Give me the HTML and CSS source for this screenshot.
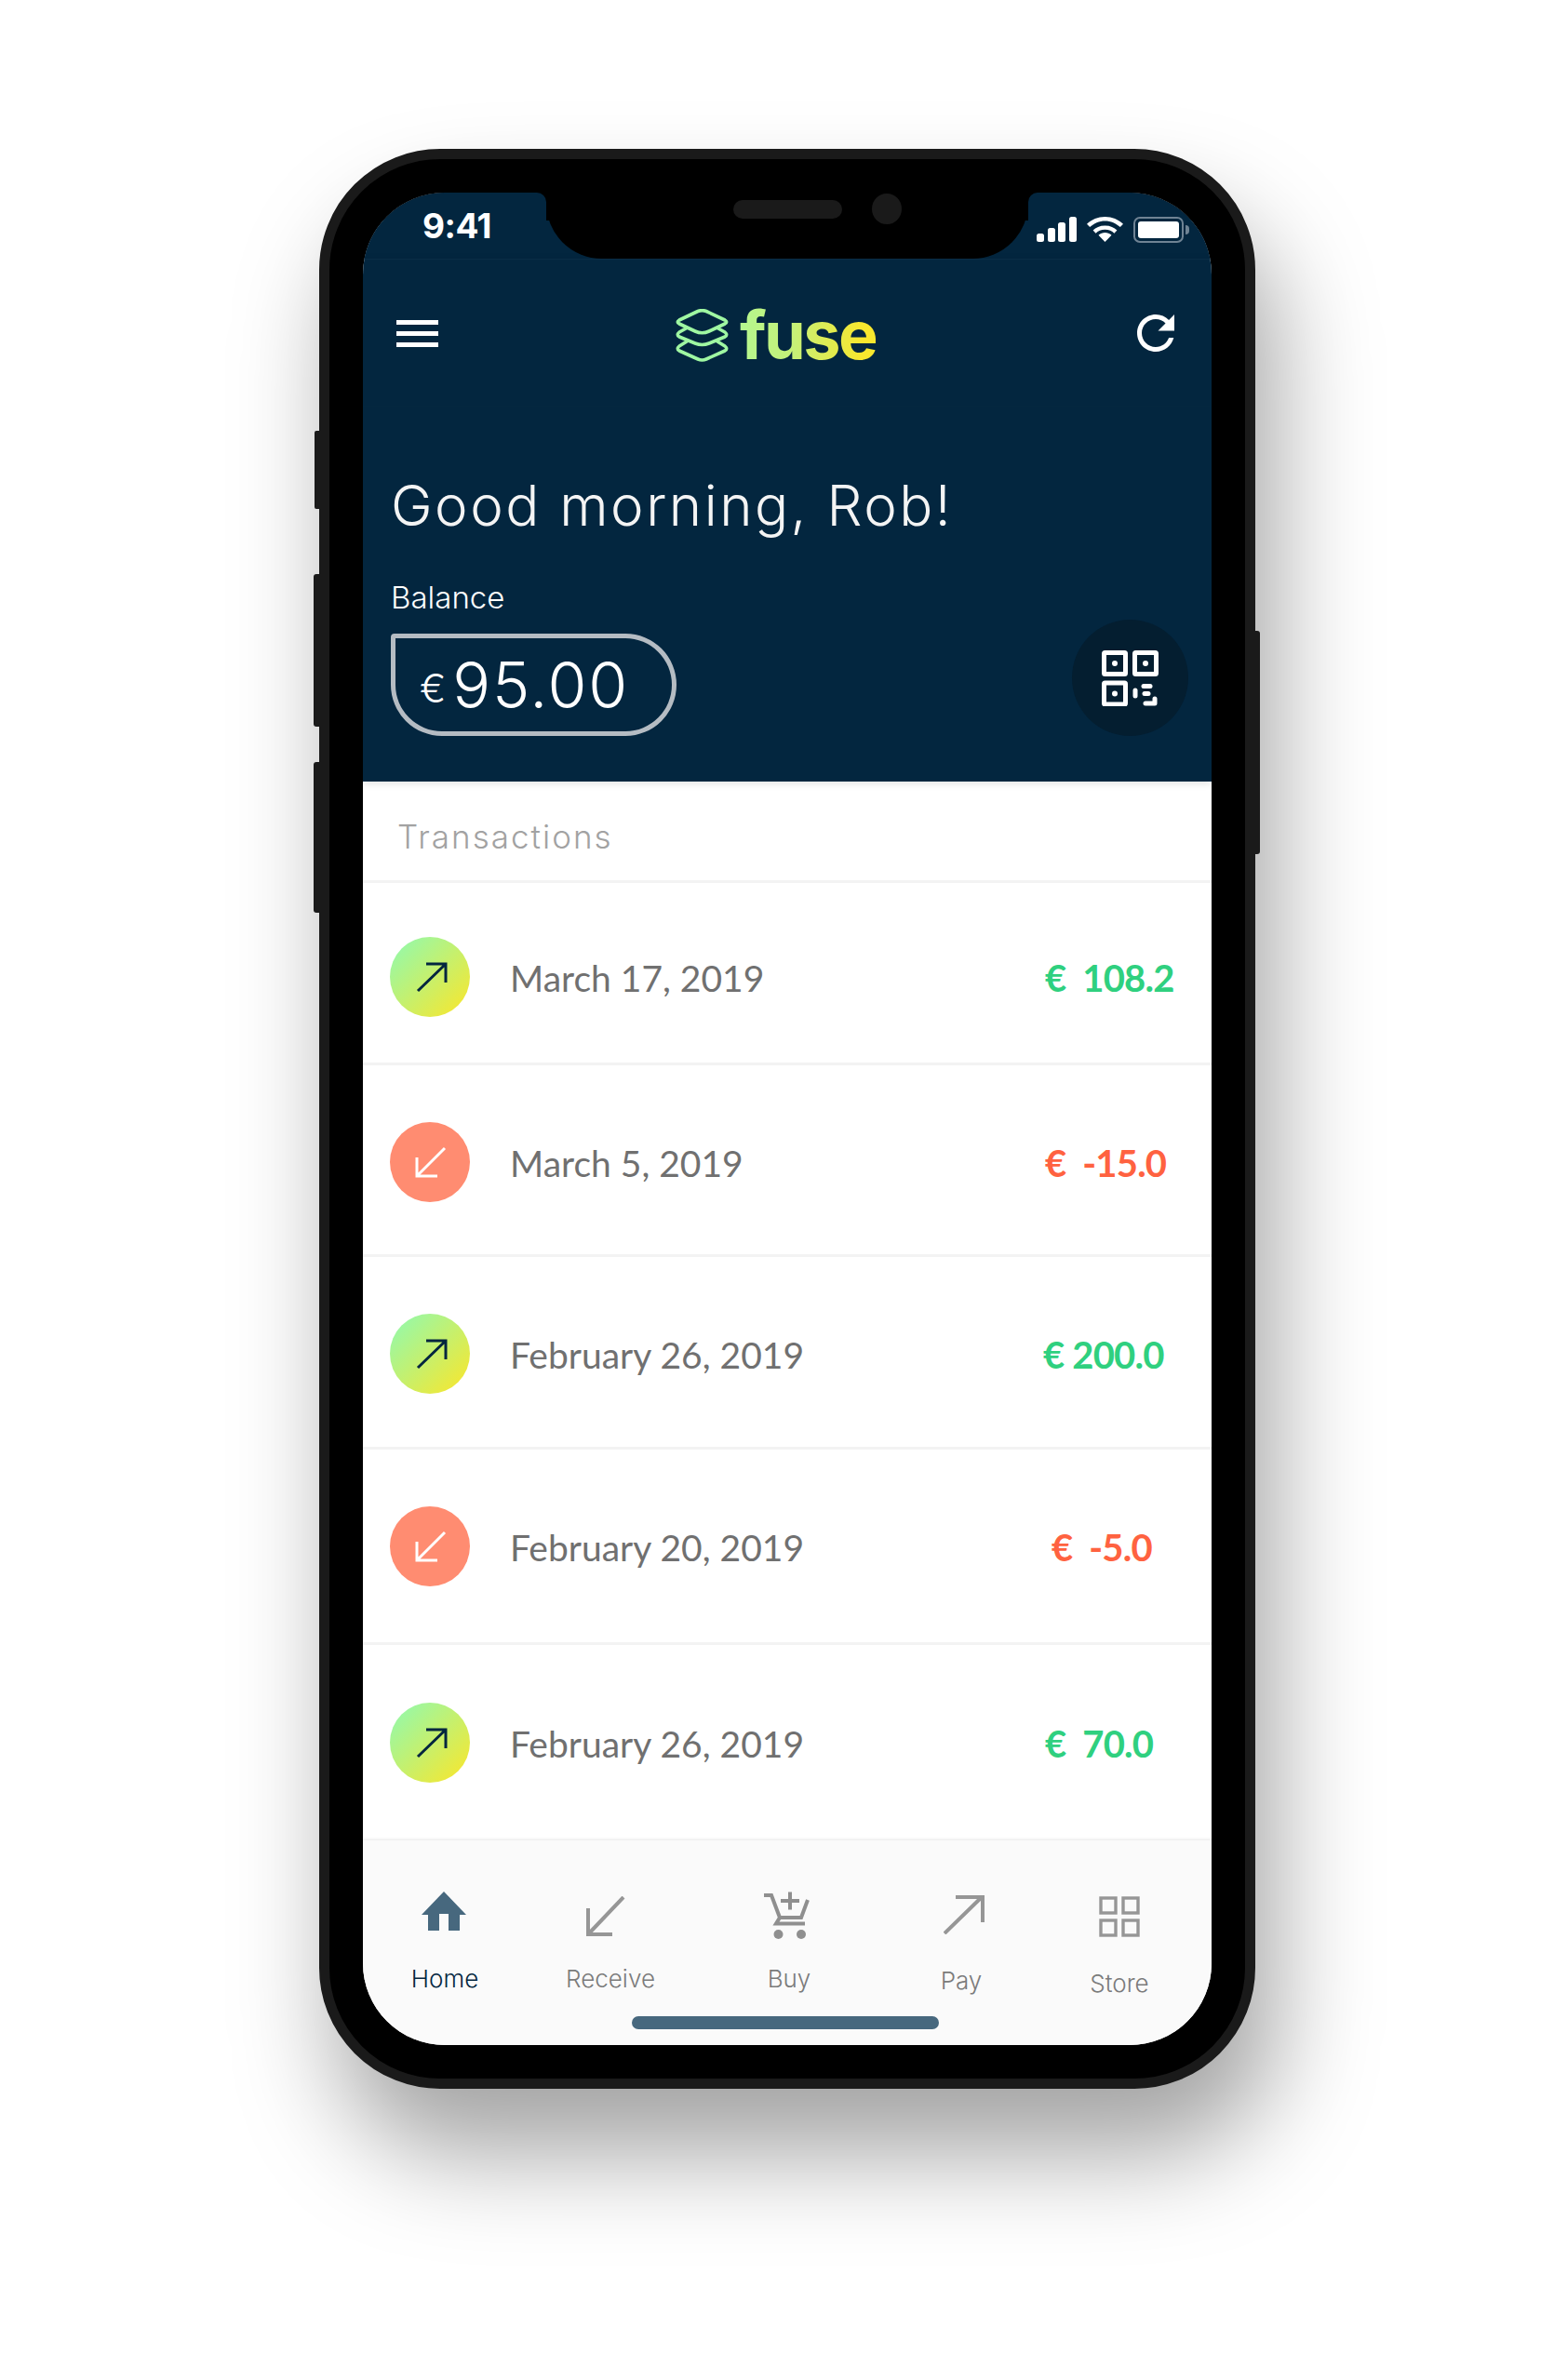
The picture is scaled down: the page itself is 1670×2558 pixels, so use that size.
FILE: index.html
```html
<!DOCTYPE HTML>
<html>
<head>
<meta charset="utf-8">
<title>fuse</title>
<link rel="stylesheet" href="styles.css">
</head>
<body>

<div class="phone">
    <!-- hardware buttons -->
    <div class="side-btn mute"></div>
    <div class="side-btn vol-up"></div>
    <div class="side-btn vol-down"></div>
    <div class="side-btn power"></div>

    <div class="screen">
        <div class="status">
            <div class="ear ear-left"><span class="clock">9:41</span></div>
            <div class="notch">
                <div class="speaker"></div>
                <div class="camera"></div>
            </div>
            <div class="ear ear-right">
                <svg class="signal" viewBox="0 0 43 27"><rect x="0" y="18" width="8" height="9" rx="2.5"/><rect x="12" y="12" width="8" height="15" rx="2.5"/><rect x="23" y="6" width="8" height="21" rx="2.5"/><rect x="35" y="0" width="8" height="27" rx="2.5"/></svg>
                <svg class="wifi" viewBox="0 0 39 27"><path d="M19.5 27 L12.5 19.8 C16.5 16.2 22.5 16.2 26.5 19.8 Z"/><path d="M19.5 9.5 C13.8 9.5 9.6 11.6 6.6 14.6 L9.6 17.7 C12 15.4 15.4 13.8 19.5 13.8 C23.6 13.8 27 15.4 29.4 17.7 L32.4 14.6 C29.4 11.6 25.2 9.5 19.5 9.5 Z"/><path d="M19.5 0 C11.8 0 5.2 3 0 7.8 L3.2 11 C7.6 7 13.2 4.4 19.5 4.4 C25.8 4.4 31.4 7 35.8 11 L39 7.8 C33.8 3 27.2 0 19.5 0 Z"/></svg>
                <div class="battery"><div class="battery-fill"></div></div>
                <div class="battery-tip"></div>
            </div>
        </div>

        <header class="top">
            <div class="appbar">
                <div class="burger"><span></span><span></span><span></span></div>
                <div class="logo">
                    <svg class="logo-mark" viewBox="0 0 57 57" fill="none" stroke="#9ff7a2" stroke-width="3.6" stroke-linecap="round" stroke-linejoin="round">
                        <path d="M24 2.500 Q28.500 0.800 33 2.500 L53 12 Q56.500 14 53 16 L36 24 Q28.500 27.500 21 24 L4 16 Q0.500 14 4 12 Z"/>
                        <path d="M12 20.500 L4 25 Q0.500 28 4 30 L21 37 Q28.500 40 36 37 L53 30 Q56.500 28 53 25 L45 20.500"/>
                        <path d="M12 35 L4 40 Q0.500 43 4 45 L24 54 Q28.500 56 33 54 L53 45 Q56.500 43 53 40 L45 35"/>
                    </svg>
                    <span class="logo-text">fuse</span>
                </div>
                <svg class="refresh" viewBox="0 0 24 24"><path d="M17.65 6.35C16.2 4.9 14.21 4 12 4c-4.42 0-7.99 3.58-7.99 8s3.57 8 7.99 8c3.73 0 6.84-2.55 7.73-6h-2.08c-.82 2.33-3.04 4-5.65 4-3.31 0-6-2.69-6-6s2.69-6 6-6c1.66 0 3.14.69 4.22 1.78L13 11h7V4l-2.35 2.35z"/></svg>
            </div>
            <div class="hero">
                <h1 class="greeting">Good morning, Rob!</h1>
                <p class="balance-label">Balance</p>
                <div class="balance-row">
                    <div class="balance-box"><span class="currency">€</span><span class="balance">95.00</span></div>
                    <div class="qr-btn">
                        <svg viewBox="0 0 61 60" fill="none" stroke="#fff" stroke-width="5" stroke-linejoin="round" stroke-linecap="round">
                            <rect x="2.5" y="2.5" width="23" height="23" rx="1"/>
                            <rect x="35.5" y="2.5" width="23" height="23" rx="1"/>
                            <rect x="2.5" y="35" width="23" height="23" rx="1"/>
                            <circle cx="14" cy="14" r="3" fill="#fff" stroke="none"/>
                            <circle cx="47" cy="14" r="3" fill="#fff" stroke="none"/>
                            <circle cx="14" cy="46.500" r="3" fill="#fff" stroke="none"/>
                            <path d="M36 43 V49"/>
                            <path d="M45 38.500 H52"/>
                            <path d="M46 46.500 H50"/>
                            <path d="M47 57 H57 V52"/>
                        </svg>
                    </div>
                </div>
            </div>
        </header>

        <div class="list-title">Transactions</div>

        <div class="list">
            <div class="row">
                <svg class="tx-icon in" viewBox="0 0 86 86"><path d="M30 58 L60 29 M39 29 H60 V49"/></svg>
                <span class="date">March 17, 2019</span>
                <span class="amount green">€&nbsp; 108.2</span>
            </div>
            <div class="row">
                <svg class="tx-icon out" viewBox="0 0 86 86"><path d="M59 28 L29 58 M29 38 V58 H51"/></svg>
                <span class="date">March 5, 2019</span>
                <span class="amount red">€&nbsp; -15.0</span>
            </div>
            <div class="row">
                <svg class="tx-icon in" viewBox="0 0 86 86"><path d="M30 58 L60 29 M39 29 H60 V49"/></svg>
                <span class="date">February 26, 2019</span>
                <span class="amount green tight">€ 200.0</span>
            </div>
            <div class="row">
                <svg class="tx-icon out" viewBox="0 0 86 86"><path d="M59 28 L29 58 M29 38 V58 H51"/></svg>
                <span class="date">February 20, 2019</span>
                <span class="amount red inset">€&nbsp; -5.0</span>
            </div>
            <div class="row">
                <svg class="tx-icon in" viewBox="0 0 86 86"><path d="M30 58 L60 29 M39 29 H60 V49"/></svg>
                <span class="date">February 26, 2019</span>
                <span class="amount green">€&nbsp; 70.0</span>
            </div>
        </div>

        <nav class="tabbar">
            <div class="tabs">
                <div class="tab active">
                    <div class="tab-icon"><svg class="ico-home" viewBox="0 0 48 42"><path d="M24 0 L48 25 H41 V42 H29 V24 H19 V42 H7 V25 H0 Z"/></svg></div>
                    <span>Home</span>
                </div>
                <div class="tab">
                    <div class="tab-icon"><svg class="ico-receive" viewBox="0 0 44 44" fill="none" stroke="#969696" stroke-width="4"><path d="M42 1 L4 41 M4 13 V41 H30"/></svg></div>
                    <span>Receive</span>
                </div>
                <div class="tab">
                    <div class="tab-icon"><svg class="ico-buy" viewBox="18 13 50 52" fill="none" stroke="#8f8f8f" stroke-width="4"><path d="M19 17 H27 L36 41 M66 22 L59 41 H36 L32 47.500 H63"/><path d="M47 13.500 V32.500 M37 23 H57"/><circle cx="34.500" cy="59" r="5" fill="#8f8f8f" stroke="none"/><circle cx="59" cy="59" r="5" fill="#8f8f8f" stroke="none"/></svg></div>
                    <span>Buy</span>
                </div>
                <div class="tab pay">
                    <div class="tab-icon"><svg class="ico-pay" viewBox="0 0 44 42" fill="none" stroke="#969696" stroke-width="4"><path d="M1 41 L41 2 M13 2 H42 V29"/></svg></div>
                    <span>Pay</span>
                </div>
                <div class="tab store">
                    <div class="tab-icon"><svg class="ico-store" viewBox="0 0 44 44" fill="none" stroke="#969696" stroke-width="3.4"><rect x="2" y="2" width="16" height="16"/><rect x="26" y="2" width="16" height="16"/><rect x="2" y="26" width="16" height="16"/><rect x="26" y="26" width="16" height="16"/></svg></div>
                    <span>Store</span>
                </div>
            </div>
            <div class="home-bar"></div>
        </nav>
    </div>
</div>

</body>
</html>
```

FILE: styles.css
```css
body {
    margin: 0;
    background-color: #fff;
    font-family: "Inter", "Liberation Sans", sans-serif;
}

/* device frame */
.phone {
    position: relative;
    box-sizing: border-box;
    width: 1006px;
    height: 2085px;
    margin: 160px 0 313px 343px;
    padding: 36px;
    background-color: #000;
    border: 11px solid #1a1a1a;
    border-radius: 130px;
    box-shadow: 20px 70px 110px rgba(0, 0, 0, 0.36);
}
.side-btn {
    position: absolute;
    background-color: #1a1a1a;
    width: 6px;
}
.mute { left: -16px; top: 292px; height: 84px; border-radius: 2px 0 0 2px; }
.vol-up { left: -17px; top: 446px; height: 164px; border-radius: 3px 0 0 3px; }
.vol-down { left: -17px; top: 648px; height: 162px; border-radius: 3px 0 0 3px; }
.power { right: -16px; top: 507px; height: 240px; border-radius: 0 3px 3px 0; }

.screen {
    height: 1991px;
    display: flex;
    flex-direction: column;
    background-color: #fff;
    border-radius: 88px;
    overflow: hidden;
}

/* status bar + notch */
.status {
    display: flex;
    height: 71px;
    background-image: linear-gradient(#000 30px, #03263f 30px);
}
.ear {
    width: 197px;
    background-color: #03263f;
    box-sizing: border-box;
}
.ear-left {
    border-top-right-radius: 10px;
    padding: 13px 0 0 64px;
}
.ear-right {
    border-top-left-radius: 10px;
    display: flex;
    align-items: flex-start;
    padding: 26px 0 0 9px;
}
.clock {
    color: #fff;
    font-size: 37px;
    font-weight: 700;
    letter-spacing: -0.5px;
    line-height: 46px;
}
.notch {
    flex: 1;
    background-color: #000;
    border-radius: 0 0 60px 60px;
    display: flex;
    padding: 1px 0 0 201px;
    box-sizing: border-box;
}
.speaker {
    width: 117px;
    height: 20px;
    margin: 7px 32px 0 0;
    background-color: #1a1a1a;
    border-radius: 10px;
}
.camera {
    width: 32px;
    height: 33px;
    background-color: #1a1a1a;
    border-radius: 50%;
}
.signal, .wifi { fill: #fff; height: 27px; }
.signal { width: 43px; }
.wifi { width: 39px; margin-left: 11px; }
.battery {
    box-sizing: border-box;
    width: 54px;
    height: 28px;
    margin-left: 11px;
    padding: 3px;
    border: 2px solid #6f8394;
    border-radius: 7px;
}
.battery-fill {
    height: 100%;
    background-color: #fff;
    border-radius: 3px;
}
.battery-tip {
    width: 4px;
    height: 10px;
    margin: 9px 0 0 2px;
    background-color: #6f8394;
    border-radius: 0 4px 4px 0;
}

/* navy header */
.top {
    background-color: #03263f;
    height: 562px;
    flex: none;
    box-sizing: border-box;
    box-shadow: 0 2px 8px rgba(0, 0, 0, 0.12);
    position: relative;
}
.appbar {
    height: 159px;
    display: flex;
    align-items: flex-start;
    box-sizing: border-box;
    border-top: 1px solid #0a2d46;
    border-bottom: 1px solid #04273f;
    padding-top: 49px;
}
.burger {
    width: 45px;
    margin: 16px 0 0 36px;
    display: flex;
    flex-direction: column;
    gap: 7px;
}
.burger span {
    height: 5px;
    background-color: #fff;
}
.logo {
    display: flex;
    align-items: flex-start;
    margin-left: 255px;
    margin-top: 4px;
}
.logo-mark {
    flex: none;
    width: 57px;
    height: 57px;
}
.logo-text {
    margin-left: 12px;
    margin-top: -12px;
    font-size: 72px;
    line-height: 80px;
    font-weight: 700;
    letter-spacing: -2.6px;
    background-image: linear-gradient(90deg, #b5f78f, #c6f177 40%, #f8e72e 90%);
    -webkit-background-clip: text;
    background-clip: text;
    color: transparent;
}
.refresh {
    width: 60px;
    height: 60px;
    margin: 0 30px 0 auto;
    fill: #fff;
}

.hero {
    padding: 0 25px 0 30px;
}
.greeting {
    margin: 71px 0 0;
    color: #f4f4f4;
    font-size: 60px;
    font-weight: 300;
    letter-spacing: 2.5px;
    line-height: 70px;
}
.balance-label {
    margin: 44px 0 0;
    color: #fff;
    font-size: 33px;
    font-weight: 300;
    line-height: 40px;
}
.balance-row {
    display: flex;
    justify-content: space-between;
    align-items: flex-end;
    margin-top: 4px;
}
.balance-box {
    box-sizing: border-box;
    width: 307px;
    height: 110px;
    padding-left: 26px;
    display: flex;
    align-items: center;
    gap: 7px;
    color: #fff;
    border: 5px solid #b5bcc3;
    border-radius: 4px 56px 56px 56px;
}
.currency {
    font-size: 42px;
    font-weight: 300;
    margin-top: 6px;
}
.balance {
    font-size: 68px;
    font-weight: 300;
    letter-spacing: 1.8px;
}
.qr-btn {
    width: 125px;
    height: 125px;
    border-radius: 50%;
    background-color: #041e30;
    display: flex;
    align-items: center;
    justify-content: center;
}
.qr-btn svg {
    width: 61px;
    height: 60px;
}

/* transaction list */
.list-title {
    height: 109px;
    flex: none;
    box-sizing: border-box;
    padding: 39px 0 0 37px;
    color: #a2a2a2;
    font-size: 35px;
    font-weight: 300;
    letter-spacing: 2px;
    line-height: 40px;
    border-bottom: 3px solid #f3f3f3;
}
.list {
    flex: 1;
}
.row {
    display: flex;
    align-items: center;
    box-sizing: border-box;
    padding-left: 29px;
    border-bottom: 3px solid #f3f3f3;
}
.row:nth-child(1) { height: 196px; padding-top: 9px; }
.row:nth-child(2) { height: 206px; padding-top: 5px; }
.row:nth-child(3) { height: 207px; padding-top: 4px; }
.row:nth-child(4) { height: 210px; }
.row:nth-child(5) { height: 210px; padding-bottom: 1px; border-bottom: 0; }

.tx-icon {
    width: 86px;
    height: 86px;
    border-radius: 50%;
    fill: none;
    stroke-width: 3;
}
.tx-icon.in {
    background-image: linear-gradient(135deg, #98f8a6 10%, #f8e72e 95%);
    stroke: #03263f;
}
.tx-icon.out {
    background-color: #ff8c71;
    stroke: #fff;
}
.date {
    flex: 1;
    margin-left: 43px;
    padding-top: 2px;
    color: #707070;
    font-family: "Lato", sans-serif;
    font-size: 39px;
}
.amount {
    width: 179px;
    padding-top: 2px;
    font-family: "Lato", sans-serif;
    font-size: 40px;
    font-weight: 700;
    letter-spacing: -0.8px;
}
.amount.green { color: #2fd07f; }
.amount.red { color: #ff6240; }
.amount.tight { margin-left: -2px; width: 181px; }
.amount.inset { margin-left: 7px; width: 172px; }

/* bottom nav */
.tabbar {
    height: 220px;
    flex: none;
    box-sizing: border-box;
    background-color: #fafafa;
    box-shadow: 0 -1px 3px rgba(0, 0, 0, 0.1);
    padding-top: 55px;
    position: relative;
}
.tabs {
    display: grid;
    grid-template-columns: 176px 180px 204px 172px 162px;
    height: 134px;
}
.tab {
    display: flex;
    flex-direction: column;
    align-items: center;
    color: #7b7b7b;
    font-size: 26px;
    font-weight: 300;
    line-height: 34px;
}
.tab-icon {
    height: 52px;
    margin-bottom: 25px;
}
.ico-home { width: 48px; height: 42px; display: block; margin-right: 3px; }
.ico-receive { width: 44px; height: 44px; display: block; margin: 5px 12px 0 0; }
.ico-buy { width: 50px; height: 52px; display: block; margin-right: 6px; }
.ico-pay { width: 44px; height: 42px; display: block; margin-top: 4px; }
.ico-store { width: 44px; height: 44px; display: block; margin-top: 5px; }
.tab.active { color: #03263f; }
.tab.active svg { fill: #47687e; }
.tab.pay span { margin: 2px 6px 0 0; }
.tab.store span { margin-top: 5px; }
.home-bar {
    width: 330px;
    height: 14px;
    margin-left: 289px;
    background-color: #47687e;
    border-radius: 7px;
}
```
